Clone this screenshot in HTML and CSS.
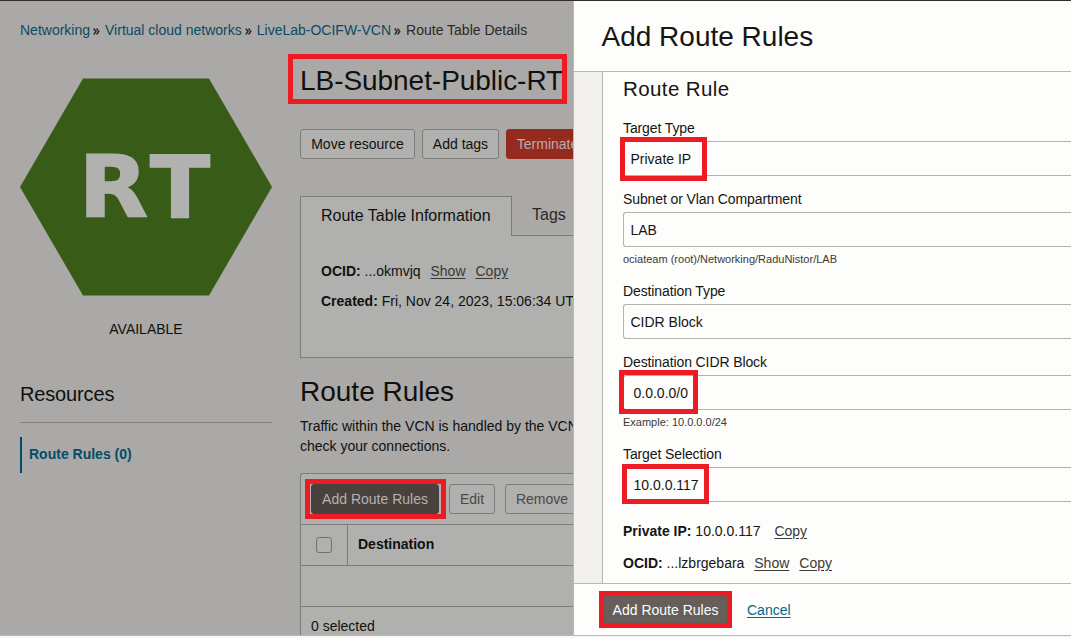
FILE: index.html
```html
<!DOCTYPE html>
<html lang="en">
<head>
<meta charset="utf-8">
<title>Route Table Details</title>
<link rel="stylesheet" href="styles.css">
</head>
<body>
<div class="page">
  <div class="details">
    <nav class="breadcrumb"><a>Networking</a><svg class="sep" viewBox="0 0 7 7"><path d="M.7.5 3 3.5.7 6.5M3.5.5 5.8 3.5 3.5 6.5"/></svg><a>Virtual cloud networks</a><svg class="sep" viewBox="0 0 7 7"><path d="M.7.5 3 3.5.7 6.5M3.5.5 5.8 3.5 3.5 6.5"/></svg><a>LiveLab-OCIFW-VCN</a><svg class="sep" viewBox="0 0 7 7"><path d="M.7.5 3 3.5.7 6.5M3.5.5 5.8 3.5 3.5 6.5"/></svg><span>Route Table Details</span></nav>
    <div class="columns">
      <aside class="sidebar">
        <svg class="hexagon" viewBox="0 0 252 218"><path d="M63 .5H189L252 109 189 217.500H63L0 109Z" fill="#385c17"/><text x="58.800" y="139.200" textLength="69.300" lengthAdjust="spacingAndGlyphs">R</text><text x="129.900" y="139.200" textLength="60" lengthAdjust="spacingAndGlyphs">T</text></svg>
        <div class="status">AVAILABLE</div>
        <h2 class="resources">Resources</h2>
        <a class="resource-link">Route Rules (0)</a>
      </aside>
      <main class="content">
        <h1 class="title">LB-Subnet-Public-RT</h1>
        <div class="actions">
          <button class="btn move">Move resource</button>
          <button class="btn tags">Add tags</button>
          <button class="btn danger">Terminate</button>
        </div>
        <div class="tabs">
          <div class="tab active">Route Table Information</div>
          <div class="tab">Tags</div>
        </div>
        <div class="info">
          <p><b>OCID:</b> ...okmvjq <a>Show</a><a>Copy</a></p>
          <p><b>Created:</b> Fri, Nov 24, 2023, 15:06:34 UTC</p>
        </div>
        <h2 class="section-title">Route Rules</h2>
        <p class="note">Traffic within the VCN is handled by the VCN<br>check your connections.</p>
        <div class="rules">
          <div class="toolbar">
            <button class="btn dark">Add Route Rules</button>
            <button class="btn disabled edit">Edit</button>
            <button class="btn disabled">Remove</button>
          </div>
          <div class="row head"><div class="check"><span class="box"></span></div><b>Destination</b></div>
          <div class="row"></div>
          <div class="selected">0 selected</div>
        </div>
      </main>
    </div>
  </div>
  <section class="panel">
    <header class="panel-head">Add Route Rules</header>
    <div class="panel-body">
      <form class="form">
        <h3>Route Rule</h3>
        <div class="field"><label>Target Type</label><div class="input">Private IP</div></div>
        <div class="field"><label>Subnet or Vlan Compartment</label><div class="input">LAB</div><small>ociateam (root)/Networking/RaduNistor/LAB</small></div>
        <div class="field"><label>Destination Type</label><div class="input">CIDR Block</div></div>
        <div class="field"><label>Destination CIDR Block</label><div class="input address">0.0.0.0/0</div><small>Example: 10.0.0.0/24</small></div>
        <div class="field"><label>Target Selection</label><div class="input address">10.0.0.117</div></div>
        <p class="first"><b>Private IP:</b> 10.0.0.117 <a class="wide">Copy</a></p>
        <p><b>OCID:</b> ...lzbrgebara <a>Show</a><a>Copy</a></p>
      </form>
    </div>
    <footer class="panel-foot"><button class="submit">Add Route Rules</button><a class="cancel">Cancel</a></footer>
  </section>
  <i class="mark mark-title"></i>
  <i class="mark mark-add"></i>
  <i class="mark mark-type"></i>
  <i class="mark mark-cidr"></i>
  <i class="mark mark-target"></i>
</div>
</body>
</html>
```

FILE: styles.css
```css
* { box-sizing: border-box; }
body { margin: 0; background: #f9f8f7; font: 14px/20px "Liberation Sans", Arial, sans-serif; color: #161513; }
h1, h2, h3, p { margin: 0; font-weight: 400; }
button { font: inherit; }
.page { position: relative; display: grid; grid-template: 634px / 574px 1fr; height: 636px; overflow: hidden; border-top: 1px solid #312d2a; border-bottom: 1px solid #b9b7b3; }

.details { min-width: 0; overflow: hidden; padding: 19px 0 0 20px; background: #aaa9a7; border-right: 1px solid #bab8b5; color: #10100e; white-space: nowrap; }
.breadcrumb { display: flex; align-items: center; color: #2a2826; }
.breadcrumb a { color: #0b4a63; }
.sep { width: 7px; height: 7px; margin: 2px 5px 0 3px; fill: none; stroke: #2a2826; stroke-width: 1.4; }
.columns { display: grid; grid-template-columns: 252px 1fr; gap: 28px; }
.sidebar { padding-top: 38px; }
.hexagon { display: block; width: 252px; height: 218px; }
.hexagon text { font: bold 85px "DejaVu Sans", sans-serif; fill: #b1b1b0; stroke: #b1b1b0; stroke-width: 1.5; }
.status { margin-top: 23px; text-align: center; }
.resources { height: 84px; padding-top: 43px; border-bottom: 1px solid #82807d; font-size: 20px; line-height: 24px; letter-spacing: -.15px; }
.resource-link { display: block; height: 36px; margin-top: 14px; padding-left: 7px; border-left: 2px solid #044c66; color: #044c66; font-weight: 700; line-height: 34px; }
.content { min-width: 0; padding-top: 23px; }
.title { font-size: 28px; line-height: 36px; letter-spacing: -.05px; }
.actions { display: flex; gap: 7px; margin-top: 30px; }
.btn { height: 30px; flex: none; padding: 0; border: 1px solid #7e7c79; border-radius: 3px; background: #b0b0ae; color: #10100e; line-height: 28px; text-align: center; }
.move { width: 115px; }
.tags { width: 77px; }
.danger { width: 83px; background: #952b1e; border-color: #952b1e; color: #b7aeab; }
.tabs { display: flex; height: 40px; margin-top: 37px; }
.tab { flex: 1; padding-left: 20px; border-bottom: 1px solid #7e7c79; color: #2a2826; font-size: 16px; line-height: 37px; }
.active { flex: 0 0 212px; border: 1px solid #7e7c79; border-bottom: 0; background: #b0b0ae; color: #10100e; }
.info { height: 122px; padding: 25px 0 0 20px; background: #b0b0ae; border-left: 1px solid #7e7c79; border-bottom: 1px solid #7e7c79; }
.info p { margin-bottom: 10px; }
.info a, .form a { margin: 0 4px 0 6px; color: #3c3936; text-decoration: underline; text-underline-offset: 2px; }
.section-title { margin-top: 16px; font-size: 28px; line-height: 36px; }
.note { margin-top: 6px; }
.rules { height: 180px; margin-top: 17px; background: #b0b0ae; border: 1px solid #7e7c79; border-right: 0; border-radius: 3px 0 0; }
.toolbar { display: flex; height: 51px; padding: 10px 0 0 10px; border-bottom: 1px solid #7e7c79; }
.dark { width: 128px; margin-right: 10px; background: #48413e; border-color: #48413e; color: #b5b2af; }
.disabled { width: 74px; color: #4b4947; }
.edit { width: 46px; margin-right: 10px; }
.row { display: flex; height: 41px; border-bottom: 1px solid #7e7c79; line-height: 39px; }
.check { display: grid; place-items: center; width: 47px; margin-right: 10px; border-right: 1px solid #7e7c79; }
.box { width: 16px; height: 16px; border: 1px solid #74716e; border-radius: 3px; }
.selected { padding: 9px 10px; }

.panel { display: flex; flex-direction: column; min-width: 0; background: #fdfdfc; }
.panel-head { flex: none; height: 71px; padding: 18px 28px 16px 27.5px; border-bottom: 1px solid #b9b7b3; font-size: 28px; line-height: 36px; }
.panel-body { flex: 1; min-height: 0; padding-left: 28px; background: #f2f0ef; }
.form { height: 100%; overflow: hidden; padding: 5px 0 0 20px; background: #fdfdfc; border-left: 1px solid #b9b7b3; }
.form h3 { margin-bottom: 17px; font-size: 20.5px; line-height: 24px; letter-spacing: .4px; }
.field { margin-bottom: 13px; }
.field label { display: block; margin-bottom: 3px; letter-spacing: -.11px; }
.input { height: 35px; padding-left: 6.5px; border: 1px solid #b5b1ab; border-right: 0; border-radius: 3px 0 0 3px; line-height: 34px; }
.address { padding-left: 9.5px; }
.field small { display: block; height: 21px; padding-top: 2px; color: #3c3936; font-size: 11px; }
.form p { margin-bottom: 12px; }
.form .first { margin-top: 19px; }
.form .wide { margin-left: 10px; }
.panel-foot { flex: none; display: flex; align-items: center; gap: 15px; height: 52px; padding-left: 25px; border-top: 1px solid #b9b7b3; }
.submit { width: 133px; height: 37px; padding: 0; border: 5px solid #ed1c24; background: #665e5b; color: #fdfdfc; }
.cancel { color: #00688c; text-decoration: underline; text-underline-offset: 2px; }

/* Highlight frames laid over the interface */
.mark { position: absolute; border: 5px solid #ed1c24; }
.mark-title { left: 288px; top: 53px; width: 279px; height: 50px; }
.mark-add { left: 305px; top: 478px; width: 141px; height: 40px; }
.mark-type { left: 620px; top: 136px; width: 87px; height: 44px; }
.mark-cidr { left: 619px; top: 369px; width: 79px; height: 44px; }
.mark-target { left: 622px; top: 463px; width: 87px; height: 40px; }
```
